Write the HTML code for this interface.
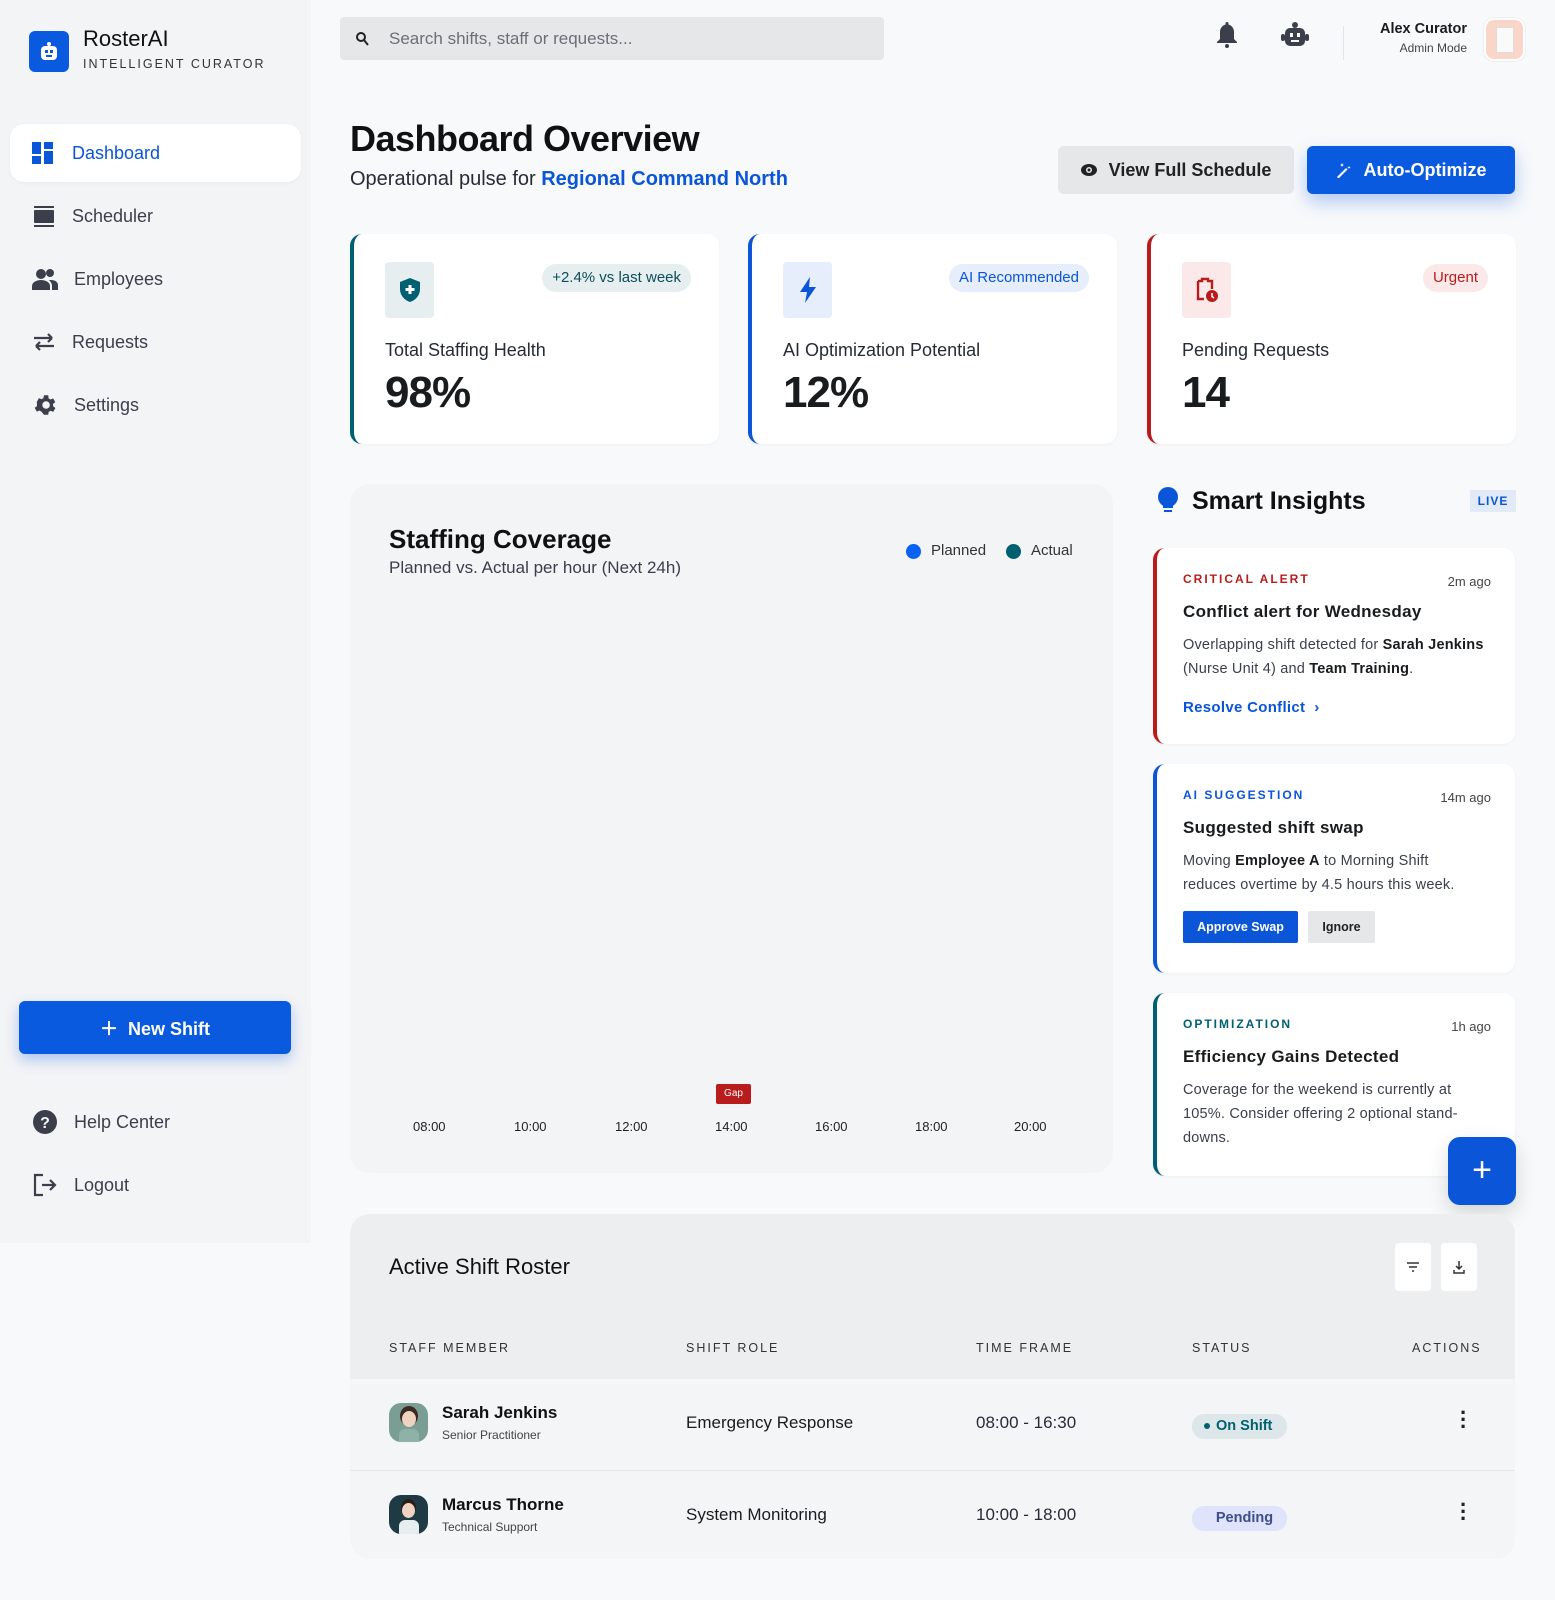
<!DOCTYPE html>
<html><head><meta charset="utf-8"><style>
*{box-sizing:border-box;margin:0;padding:0}
body{width:1555px;height:1600px;background:#f8f9fb;font-family:"Liberation Sans",sans-serif;color:#191c1e;position:relative;overflow:hidden}
.abs{position:absolute}
.side{left:0;top:0;width:311px;height:1243px;background:#f3f4f6}
.nav{position:absolute;left:10px;width:291px;height:58px;display:flex;align-items:center;padding-left:22px;font-size:18px;color:#3a3f4b;border-radius:14px}
.nav svg{margin-right:16px}
.nav.act{background:#fff;color:#0a55d8;box-shadow:0 1px 3px rgba(0,0,0,.05)}
.card{background:#fff;border-radius:12px;box-shadow:0 1px 3px rgba(0,0,0,.04)}
.kpi{top:234px;width:369px;height:210px;border-left:4px solid}
.kpi .ic{position:absolute;left:31px;top:28px;width:49px;height:56px;border-radius:4px;display:flex;align-items:center;justify-content:center}
.kpi .pill{position:absolute;right:28px;top:30px;height:28px;border-radius:14px;padding:0 10px;font-size:15px;line-height:28px}
.kpi .lab{position:absolute;left:31px;top:106px;font-size:18px;color:#262b35}
.kpi .val{position:absolute;left:31px;top:134px;font-size:44px;font-weight:bold;letter-spacing:-1px}
.ins{left:1153px;width:362px;border-left:4px solid;border-radius:12px;background:#fff;padding:24px 20px 0 26px;box-shadow:0 1px 3px rgba(0,0,0,.04)}
.ins .tag{font-size:12px;font-weight:bold;letter-spacing:2px}
.ins .tm{position:absolute;right:24px;top:26px;font-size:13px;color:#444}
.ins h4{font-size:17px;font-weight:bold;margin-top:16px;letter-spacing:.3px}
.ins p{font-size:14.5px;line-height:24px;color:#3a3f4b;margin-top:11px;letter-spacing:.2px;white-space:nowrap}
.ins b{color:#191c1e}
.th{position:absolute;top:1341px;font-size:12.5px;letter-spacing:2px;color:#333}
</style></head><body>
<div class="abs side"></div>
<div class="abs" style="left:29px;top:31px;width:40px;height:41px;border-radius:6px;background:#0a5ae0;display:flex;align-items:center;justify-content:center">
<svg width="24" height="24" viewBox="0 0 24 24"><circle cx="12" cy="4" r="2" fill="#fff"/><rect x="4" y="6" width="16" height="14" rx="4" fill="#fff"/><rect x="8" y="10" width="3" height="3" fill="#0a5ae0"/><rect x="13" y="10" width="3" height="3" fill="#0a5ae0"/><rect x="9" y="15" width="6" height="2" fill="#0a5ae0"/></svg></div>
<div class="abs" style="left:83px;top:26px;font-size:22px;color:#111">RosterAI</div>
<div class="abs" style="left:83px;top:57px;font-size:12.5px;letter-spacing:2px;color:#333">INTELLIGENT CURATOR</div>

<div class="nav act" style="top:124px"><svg width="22" height="22" viewBox="0 0 22 22" fill="#0a55d8"><rect x="0" y="0" width="9" height="12"/><rect x="12" y="0" width="9" height="7"/><rect x="0" y="14" width="9" height="8"/><rect x="12" y="9" width="9" height="13"/></svg><span style="margin-left:2px">Dashboard</span></div>
<div class="nav" style="top:187px"><svg width="24" height="24" viewBox="0 0 24 24" fill="#3a3f4b"><rect x="2" y="2" width="20" height="2"/><rect x="2" y="6" width="20" height="13" rx="1"/><rect x="2" y="21" width="20" height="2"/></svg>Scheduler</div>
<div class="nav" style="top:250px"><svg width="26" height="22" viewBox="0 0 26 22" fill="#3a3f4b"><circle cx="9" cy="6" r="5"/><circle cx="18" cy="5" r="4"/><path d="M0 22v-4c0-4 5-6 9-6s9 2 9 6v4z"/><path d="M19 12c4 0 7 2 7 5v5h-6v-4c0-2-1-4-3-6z"/></svg>Employees</div>
<div class="nav" style="top:313px"><svg width="24" height="22" viewBox="0 0 24 22" fill="none" stroke="#3a3f4b" stroke-width="2.2"><path d="M4 15h18M4 15l4-4M4 15l4 4M20 7H2M20 7l-4-4M20 7l-4 4"/></svg>Requests</div>
<div class="nav" style="top:376px"><svg width="26" height="26" viewBox="0 0 24 24" fill="#3a3f4b"><path d="M19.4 13a7.5 7.5 0 0 0 0-2l2.1-1.6-2-3.5-2.5 1a7 7 0 0 0-1.7-1L15 3h-4l-.4 2.7a7 7 0 0 0-1.7 1l-2.5-1-2 3.5L4.6 11a7.5 7.5 0 0 0 0 2l-2.1 1.6 2 3.5 2.5-1a7 7 0 0 0 1.7 1L11 21h4l.4-2.7a7 7 0 0 0 1.7-1l2.5 1 2-3.5zM13 15.5a3.5 3.5 0 1 1 0-7 3.5 3.5 0 0 1 0 7z"/></svg>Settings</div>

<div class="abs" style="left:19px;top:1001px;width:272px;height:53px;border-radius:6px;background:#0a5ae0;color:#fff;font-size:18px;font-weight:bold;display:flex;align-items:center;justify-content:center;box-shadow:0 6px 14px rgba(10,90,224,.3)">＋&nbsp; New Shift</div>
<div class="nav" style="top:1093px"><svg width="26" height="26" viewBox="0 0 26 26"><circle cx="13" cy="13" r="12" fill="#3a3f4b"/><text x="13" y="19" font-size="16" font-weight="bold" fill="#f3f4f6" text-anchor="middle" font-family="Liberation Sans">?</text></svg>Help Center</div>
<div class="nav" style="top:1156px"><svg width="26" height="26" viewBox="0 0 26 26" fill="none" stroke="#3a3f4b" stroke-width="2.2"><path d="M11 3H3v20h8M10 13h13M18 8l5 5-5 5"/></svg>Logout</div>

<div class="abs" style="left:340px;top:17px;width:544px;height:43px;border-radius:4px;background:#e6e7e9"></div>
<svg class="abs" style="left:356px;top:32px" width="13" height="14" viewBox="0 0 13 14" fill="none" stroke="#222" stroke-width="2"><circle cx="5" cy="5" r="4"/><path d="M8 8l4 5"/></svg>
<div class="abs" style="left:389px;top:29px;font-size:17px;color:#6b6f77">Search shifts, staff or requests...</div>
<svg class="abs" style="left:1216px;top:22px" width="22" height="26" viewBox="0 0 22 26" fill="#3a3f4b"><path d="M11 0c1 0 1.5.6 1.5 1.5v1C16 3.5 18 6.5 18 10v7l3 3v1H1v-1l3-3v-7c0-3.5 2-6.5 5.5-7.5v-1C9.5.6 10 0 11 0z"/><circle cx="11" cy="24" r="2"/></svg>
<svg class="abs" style="left:1281px;top:22px" width="28" height="26" viewBox="0 0 28 26" fill="#3a3f4b"><circle cx="14" cy="3" r="3"/><rect x="4" y="6" width="20" height="18" rx="5"/><rect x="0" y="12" width="4" height="7" rx="2"/><rect x="24" y="12" width="4" height="7" rx="2"/><rect x="9" y="11" width="3" height="4" fill="#f8f9fb"/><rect x="16" y="11" width="3" height="4" fill="#f8f9fb"/><rect x="10" y="18" width="8" height="2" fill="#f8f9fb"/></svg>
<div class="abs" style="left:1343px;top:26px;width:1px;height:34px;background:#e4e5e8"></div>
<div class="abs" style="right:88px;top:21px;font-size:14.5px;font-weight:bold;color:#191c1e;text-align:right">Alex Curator</div>
<div class="abs" style="right:88px;top:41px;font-size:12px;color:#444;text-align:right">Admin Mode</div>
<div class="abs" style="left:1484px;top:18px;width:41px;height:43px;border-radius:10px;background:#fad6c8;border:2px solid #fff;box-shadow:0 0 0 1px #eee"><div style="margin:7px auto;width:18px;height:26px;background:#fafafa;border:1px solid #ddd"></div></div>

<div class="abs" style="left:350px;top:118px;font-size:36px;font-weight:bold;color:#111;letter-spacing:-.5px">Dashboard Overview</div>
<div class="abs" style="left:350px;top:168px;font-size:20px;color:#262b35">Operational pulse for <span style="color:#0a55d8;font-weight:bold">Regional Command North</span></div>
<div class="abs" style="left:1058px;top:146px;width:236px;height:48px;border-radius:6px;background:#e6e7e9;font-size:18px;font-weight:bold;color:#222;display:flex;align-items:center;justify-content:center"><svg width="16" height="12" viewBox="0 0 16 12" style="margin-right:12px"><ellipse cx="8" cy="6" rx="8" ry="6" fill="#222"/><circle cx="8" cy="6" r="3" fill="#e6e7e9"/><circle cx="8" cy="6" r="1.5" fill="#222"/></svg>View Full Schedule</div>
<div class="abs" style="left:1307px;top:146px;width:208px;height:48px;border-radius:6px;background:#0a5ae0;font-size:18px;font-weight:bold;color:#fff;display:flex;align-items:center;justify-content:center;box-shadow:0 8px 18px rgba(10,90,224,.3)"><svg width="16" height="16" viewBox="0 0 16 16" style="margin-right:12px" fill="#fff"><path d="M1 15l9-9 1.5 1.5-9 9z"/><path d="M6 1l.6 1.4L8 3l-1.4.6L6 5l-.6-1.4L4 3l1.4-.6zM13 4l.5 1 1 .5-1 .5L13 7l-.5-1-1-.5 1-.5z"/></svg>Auto-Optimize</div>

<div class="abs card kpi" style="left:350px;border-color:#006071">
<div class="ic" style="background:#e6eef0"><svg width="20" height="24" viewBox="0 0 20 24"><path d="M10 0l10 4v7c0 6-4 11-10 13C4 22 0 17 0 11V4z" fill="#006071"/><path d="M8.5 7h3v3h3v3h-3v3h-3v-3h-3v-3h3z" fill="#fff"/></svg></div>
<div class="pill" style="background:#e6eef0;color:#0b4e5b">+2.4% vs last week</div>
<div class="lab">Total Staffing Health</div><div class="val">98%</div></div>
<div class="abs card kpi" style="left:748px;border-color:#0a55d8">
<div class="ic" style="background:#e6edfb"><svg width="18" height="26" viewBox="0 0 18 26"><path d="M11 0L1 15h7l-2 11 11-16h-7z" fill="#0a55d8"/></svg></div>
<div class="pill" style="background:#e6edfb;color:#0a55d8">AI Recommended</div>
<div class="lab">AI Optimization Potential</div><div class="val">12%</div></div>
<div class="abs card kpi" style="left:1147px;border-color:#b91c1c">
<div class="ic" style="background:#fbe9e9"><svg width="24" height="26" viewBox="0 0 24 26"><path d="M3 4h4V2h6v2h4v8M9 22H3V4" fill="none" stroke="#b91c1c" stroke-width="2.4"/><circle cx="17" cy="19" r="6" fill="#b91c1c"/><path d="M17 16v3.5l2 1.5" stroke="#fff" stroke-width="1.5" fill="none"/></svg></div>
<div class="pill" style="background:#fbe9e9;color:#b91c1c">Urgent</div>
<div class="lab">Pending Requests</div><div class="val">14</div></div>

<div class="abs" style="left:350px;top:484px;width:763px;height:689px;border-radius:20px;background:#f3f4f6"></div>
<div class="abs" style="left:389px;top:524px;font-size:26px;font-weight:bold;color:#111">Staffing Coverage</div>
<div class="abs" style="left:389px;top:558px;font-size:17px;color:#3a3f4b">Planned vs. Actual per hour (Next 24h)</div>
<div class="abs" style="left:906px;top:544px;width:15px;height:15px;border-radius:50%;background:#0a62f5"></div>
<div class="abs" style="left:931px;top:542px;font-size:15px;color:#333">Planned</div>
<div class="abs" style="left:1006px;top:544px;width:15px;height:15px;border-radius:50%;background:#006071"></div>
<div class="abs" style="left:1031px;top:542px;font-size:15px;color:#333">Actual</div>
<div class="abs" style="left:716px;top:1084px;width:35px;height:20px;border-radius:2px;background:#b91c1c;color:#fff;font-size:10px;text-align:center;line-height:20px">Gap</div>
<div class="abs" style="left:413px;top:1119px;font-size:13px;color:#222;width:600px">
<span class="abs" style="left:0">08:00</span><span class="abs" style="left:101px">10:00</span><span class="abs" style="left:202px">12:00</span><span class="abs" style="left:302px">14:00</span><span class="abs" style="left:402px">16:00</span><span class="abs" style="left:502px">18:00</span><span class="abs" style="left:601px">20:00</span></div>

<svg class="abs" style="left:1157px;top:487px" width="22" height="28" viewBox="0 0 22 28"><circle cx="11" cy="10" r="10" fill="#0a55d8"/><rect x="6" y="16" width="10" height="5" fill="#0a55d8"/><rect x="7" y="23" width="8" height="2" fill="#0a55d8"/></svg>
<div class="abs" style="left:1192px;top:487px;font-size:25px;font-weight:bold;color:#111">Smart Insights</div>
<div class="abs" style="left:1470px;top:490px;width:46px;height:22px;background:#e3eaf7;color:#0a55d8;font-size:12px;font-weight:bold;text-align:center;line-height:22px;letter-spacing:1px">LIVE</div>

<div class="abs ins" style="top:548px;height:196px;border-color:#b91c1c"><div class="tag" style="color:#b91c1c">CRITICAL ALERT</div><div class="tm">2m ago</div><h4>Conflict alert for Wednesday</h4><p>Overlapping shift detected for <b>Sarah Jenkins</b><br>(Nurse Unit 4) and <b>Team Training</b>.</p><div style="margin-top:18px;font-size:15px;font-weight:bold;color:#0a55d8;letter-spacing:.3px">Resolve Conflict &nbsp;›</div></div>
<div class="abs ins" style="top:764px;height:209px;border-color:#0a55d8"><div class="tag" style="color:#0a55d8">AI SUGGESTION</div><div class="tm">14m ago</div><h4>Suggested shift swap</h4><p>Moving <b>Employee A</b> to Morning Shift<br>reduces overtime by 4.5 hours this week.</p>
<div style="margin-top:14px;display:flex;gap:10px"><div style="width:115px;height:32px;background:#0a55d8;color:#fff;font-size:12.5px;font-weight:bold;line-height:32px;text-align:center;border-radius:2px">Approve Swap</div><div style="width:67px;height:32px;background:#e6e7e9;color:#222;font-size:12.5px;font-weight:bold;line-height:32px;text-align:center;border-radius:2px">Ignore</div></div></div>
<div class="abs ins" style="top:993px;height:183px;border-color:#006071"><div class="tag" style="color:#006071">OPTIMIZATION</div><div class="tm">1h ago</div><h4>Efficiency Gains Detected</h4><p>Coverage for the weekend is currently at<br>105%. Consider offering 2 optional stand-<br>downs.</p></div>
<div class="abs" style="left:1448px;top:1137px;width:68px;height:68px;border-radius:12px;background:#0a55d8;color:#fff;font-size:34px;text-align:center;line-height:66px;box-shadow:0 8px 20px rgba(0,0,0,.15)">+</div>

<div class="abs" style="left:350px;top:1214px;width:1165px;height:345px;border-radius:20px;background:#f4f5f7;overflow:hidden">
<div style="height:165px;background:#edeef0"></div>
<div style="position:absolute;top:256px;left:0;right:0;height:1px;background:#e6e7ea"></div></div>
<div class="abs" style="left:389px;top:1254px;font-size:22px;color:#111">Active Shift Roster</div>
<div class="abs" style="left:1395px;top:1243px;width:36px;height:48px;background:#fff;border-radius:4px"><svg style="margin:18px 11px" width="14" height="12" viewBox="0 0 14 12" stroke="#333" stroke-width="1.5"><path d="M1 2h12M3 6h8M6 10h2"/></svg></div>
<div class="abs" style="left:1441px;top:1243px;width:36px;height:48px;background:#fff;border-radius:4px"><svg style="margin:17px 11px" width="14" height="14" viewBox="0 0 14 14" stroke="#333" stroke-width="1.5" fill="none"><path d="M7 1v8M4 6l3 3 3-3M2 10v3h10v-3"/></svg></div>
<div class="th" style="left:389px">STAFF MEMBER</div><div class="th" style="left:686px">SHIFT ROLE</div><div class="th" style="left:976px">TIME FRAME</div><div class="th" style="left:1192px">STATUS</div><div class="th" style="left:1412px">ACTIONS</div>

<div class="abs" style="left:389px;top:1403px;width:39px;height:39px;border-radius:12px;background:#7a9e94;overflow:hidden"><div style="margin:8px auto 0;width:14px;height:16px;border-radius:50%;background:#f0d2c0;box-shadow:0 -3px 0 2px #3b2a22"></div><div style="margin:2px auto 0;width:20px;height:14px;background:#8fb2a6;border-radius:6px 6px 0 0"></div></div>
<div class="abs" style="left:442px;top:1403px;font-size:17px;font-weight:bold;color:#111">Sarah Jenkins</div>
<div class="abs" style="left:442px;top:1428px;font-size:12px;color:#444">Senior Practitioner</div>
<div class="abs" style="left:686px;top:1413px;font-size:17px;color:#191c1e">Emergency Response</div>
<div class="abs" style="left:976px;top:1413px;font-size:17px;color:#262b35">08:00 - 16:30</div>
<div class="abs" style="left:1192px;top:1414px;width:95px;height:25px;border-radius:12px;background:#dde6e8;color:#006071;font-size:14.5px;font-weight:bold;line-height:25px;padding-left:12px"><span style="display:inline-block;width:6px;height:6px;border-radius:50%;background:#006071;vertical-align:middle;margin-right:6px"></span>On Shift</div>
<div class="abs" style="left:1460px;top:1409px;font-size:22px;font-weight:bold;line-height:7px;color:#222">·<br>·<br>·</div>

<div class="abs" style="left:389px;top:1495px;width:39px;height:39px;border-radius:12px;background:#1e3b45;overflow:hidden"><div style="margin:8px auto 0;width:13px;height:15px;border-radius:50%;background:#f0d2c0;box-shadow:0 -3px 0 1px #2a1d18"></div><div style="margin:2px auto 0;width:20px;height:14px;background:#e8eef0;border-radius:6px 6px 0 0"></div></div>
<div class="abs" style="left:442px;top:1495px;font-size:17px;font-weight:bold;color:#111">Marcus Thorne</div>
<div class="abs" style="left:442px;top:1520px;font-size:12px;color:#444">Technical Support</div>
<div class="abs" style="left:686px;top:1505px;font-size:17px;color:#191c1e">System Monitoring</div>
<div class="abs" style="left:976px;top:1505px;font-size:17px;color:#262b35">10:00 - 18:00</div>
<div class="abs" style="left:1192px;top:1506px;width:95px;height:25px;border-radius:12px;background:#dfe3fb;color:#3d4f8a;font-size:14.5px;font-weight:bold;line-height:25px;text-align:center;padding-left:10px">Pending</div>
<div class="abs" style="left:1460px;top:1501px;font-size:22px;font-weight:bold;line-height:7px;color:#222">·<br>·<br>·</div>
</body></html>
